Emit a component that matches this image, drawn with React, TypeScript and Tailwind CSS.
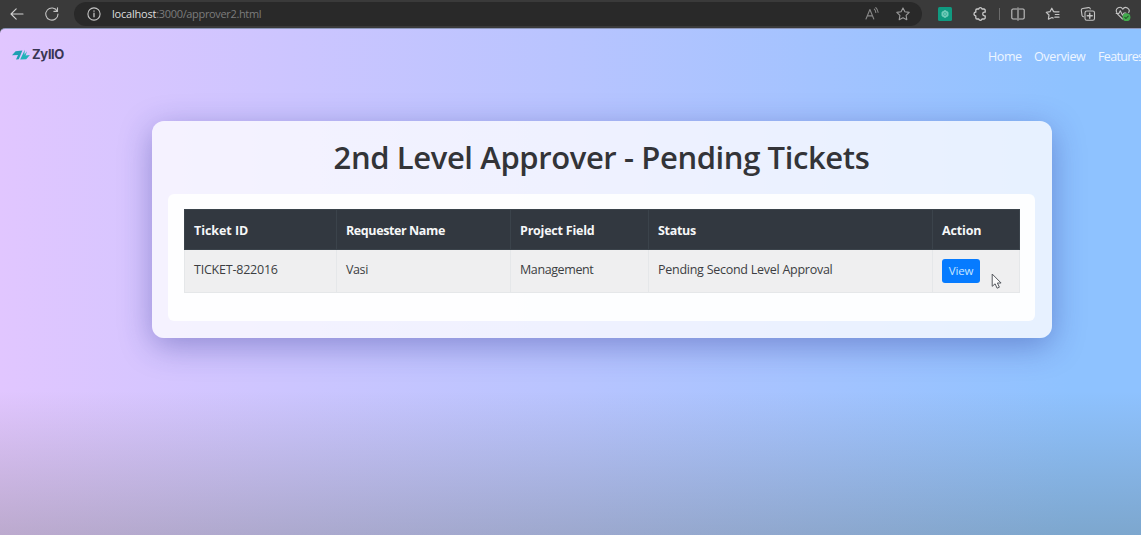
import type { ReactNode } from "react";

type Column = { label: string; value: string; width: string; head: string; cell: string };

const columns: Column[] = [
  { label: "Ticket ID", value: "TICKET-822016", width: "w-[152px]", head: "tracking-[-0.05px]", cell: "tracking-[-0.22px]" },
  { label: "Requester Name", value: "Vasi", width: "w-[174px]", head: "tracking-[-0.4px]", cell: "tracking-[-0.4px]" },
  { label: "Project Field", value: "Management", width: "w-[138px]", head: "tracking-[-0.22px]", cell: "tracking-[-0.4px]" },
  { label: "Status", value: "Pending Second Level Approval", width: "w-[284px]", head: "tracking-[-0.3px]", cell: "tracking-[-0.26px]" },
  { label: "Action", value: "", width: "w-[87px]", head: "tracking-[-0.15px]", cell: "" },
];

function Icon({ children, className = "text-[#c4c4c4]" }: { children: ReactNode; className?: string }) {
  return (
    <svg
      viewBox="0 0 16 16"
      className={`size-4 shrink-0 ${className}`}
      fill="none"
      stroke="currentColor"
      strokeWidth="1.1"
      strokeLinecap="round"
      strokeLinejoin="round"
    >
      {children}
    </svg>
  );
}

function BrowserBar() {
  return (
    <div className="flex h-7 items-center bg-[#3a3a3a] pl-[9px]">
      <Icon className="text-[#d2d2d2]">
        <path d="M14 8H2M7.200 2.800 2 8l5.200 5.200" />
      </Icon>
      <div className="w-[19px]" />
      <Icon className="text-[#c4c4c4]">
        <path d="M13.300 5.200A6.100 6.100 0 1 0 14 8M13.500 1.800v3.600H9.900" />
      </Icon>
      <div className="ml-[14px] flex h-6 w-[848px] shrink-0 items-center rounded-full bg-[#292929] pl-[12px] pr-[11px]">
        <Icon className="text-[#c4c4c4]">
          <circle cx="8" cy="8" r="6.100" />
          <path d="M8 7.200v3.600M8 5v.2" strokeWidth="1.300" />
        </Icon>
        <span className="ml-[10px] whitespace-nowrap text-[11px] leading-4 tracking-[-0.34px] text-[#7c7c7c]">
          <span className="tracking-[-0.2px] text-[#dedede]">localhost</span>:3000/approver2.html
        </span>
        <div className="flex-1" />
        <Icon className="text-[#888888]">
          <path d="M2 13 5.900 3.500 9.800 13M3.300 9.900h5.200M10.300 3.200a5 5 0 0 1 1.500 3.300M11.800 1.600a7 7 0 0 1 2.300 4.600" />
        </Icon>
        <div className="w-[15px]" />
        <Icon className="text-[#9a9a9a]">
          <path d="m8 1.900 1.900 3.900 4.300.6-3.100 3 .7 4.300L8 11.700l-3.800 2 .7-4.300-3.100-3 4.300-.6z" />
        </Icon>
      </div>
      <svg viewBox="0 0 14 14" className="ml-[16px] size-[14px] shrink-0">
        <rect width="14" height="14" rx="1.500" fill="#109a80" />
        <path d="m7 3.500 3 1.700v3.600l-3 1.700-3-1.700V5.200z" fill="#71cbb9" stroke="#71cbb9" strokeLinejoin="round" />
        <circle cx="7" cy="7" r="1.500" fill="none" stroke="#32ad95" strokeWidth=".8" />
      </svg>
      <div className="w-[20px]" />
      <Icon className="text-[#cacaca]">
        <path
          strokeWidth="1.300"
          d="M5 3h1.700a1.700 1.700 0 0 1 3.300 0h2a1.200 1.200 0 0 1 1.200 1.200v2h-.7a1.800 1.800 0 0 0 0 3.600h.7v2A1.200 1.200 0 0 1 12 13h-2a1.700 1.700 0 0 1-3.300 0H5a1.200 1.200 0 0 1-1.200-1.200v-2a1.800 1.800 0 0 1 0-3.600v-2A1.200 1.200 0 0 1 5 3Z"
        />
      </Icon>
      <div className="ml-[11px] h-3 w-px bg-[#6b6b6b]" />
      <div className="w-[10px]" />
      <Icon>
        <path d="M6.600 3H3a1.200 1.200 0 0 0-1.200 1.200v7.600A1.200 1.200 0 0 0 3 13h3.600M9.400 3H13a1.200 1.200 0 0 1 1.200 1.200v7.600A1.200 1.200 0 0 1 13 13H9.400M8 1.800v12.400" />
      </Icon>
      <div className="w-[19px]" />
      <Icon>
        <path strokeWidth="1.200" d="M9.800 5.800 8.600 5.600 6.800 2.200 5 5.700l-3.700.6L4 9l-.6 4.200L7 11.500l1.200.6M10 5.800h4M10.300 8.500h3.700M9.800 11.200H14" />
      </Icon>
      <div className="w-[19px]" />
      <Icon>
        <path d="M3.600 10.800A2 2 0 0 1 2 9.300L1.300 4.400a1.700 1.700 0 0 1 1.400-1.900l5.700-.9a1.700 1.700 0 0 1 1.900 1.300" />
        <rect x="5" y="5" width="9.500" height="9.300" rx="1.800" />
        <path d="M9.750 7.200v5M7.250 9.700h5" strokeWidth="1.400" />
      </Icon>
      <div className="w-[19px]" />
      <Icon>
        <path d="M7.500 13 2.600 8.200M1.800 6.500a3.300 3.300 0 0 1 6-3.300 3.300 3.300 0 0 1 5.900 3.300M1.200 7.500h2.600l1.500-2.700 2.200 4.400 1.500-2.200h2" />
        <circle cx="11.500" cy="11.200" r="3.900" fill="#43ac4e" stroke="none" />
        <path d="m9.800 11.300 1.200 1.200 2.200-2.400" stroke="#25572a" />
      </Icon>
    </div>
  );
}

function SiteHeader() {
  return (
    <header className="flex h-[52px] items-start justify-between">
      <div className="flex items-center pl-3 pt-[15px]">
        <svg viewBox="0 0 18 12" className="mt-px h-3 w-[18px]">
          <path d="M0 6.200 3.600 2.300l6.800-.8-3.600 8.700L4 10.600l2-4.600z" fill="#1e9fb2" />
          <path d="M12.800.8 8.200 10.500l6-.2L17.900 6l-4.300.5 1.400-4.200-2.600 3.500z" fill="#20b3b8" />
        </svg>
        <span className="ml-[2px] font-[Inter] text-[13px] font-bold leading-5 tracking-[-0.3px] text-[#393552]">ZyllO</span>
      </div>
      <nav className="flex w-[153px] gap-3 whitespace-nowrap pt-[18px] text-[12.500px] leading-5 text-[#eef6ff]">
        <a className="w-[34px] shrink-0 tracking-[-0.4px]">Home</a>
        <a className="w-[52px] shrink-0 tracking-[-0.35px]">Overview</a>
        <a className="shrink-0 tracking-[-0.65px]">Features</a>
      </nav>
    </header>
  );
}

function TicketTable() {
  return (
    <table className="w-[835px] table-fixed border-collapse text-left text-[12.500px] whitespace-nowrap">
      <thead>
        <tr className="h-10 bg-[#323840] text-[#f6f7f8]">
          {columns.map((c) => (
            <th key={c.label} className={`${c.width} ${c.head} border border-[#3b434b] px-[9px] pt-[4px] font-bold`}>
              {c.label}
            </th>
          ))}
        </tr>
      </thead>
      <tbody>
        <tr className="h-[43px] bg-[#efeff0] text-[#3c3e42]">
          {columns.map((c) => (
            <td key={c.label} className={`${c.cell} border border-[#e5e7e9] px-[9px] pb-[2px]`}>
              {c.value || (
                <button className="mt-[2px] block h-6 w-[38px] rounded-[3px] bg-[#067bff] text-[11.500px] leading-6 tracking-[-0.2px] text-[#c7e6ff]">
                  View
                </button>
              )}
            </td>
          ))}
        </tr>
      </tbody>
    </table>
  );
}

export default function App() {
  return (
    <div className="relative flex h-[535px] w-[1141px] flex-col overflow-hidden bg-[#3a3a3a] font-['Open_Sans','Noto_Sans',sans-serif]">
      <BrowserBar />
      <div className="flex-1 rounded-tl-[5px] border-t border-[#8b95b8] bg-[linear-gradient(180deg,transparent_362px,rgba(70,80,50,0.27)_525px),linear-gradient(90deg,#e1c6ff_0%,#b8c4ff_50%,#8ec2ff_94%,#8ec2ff_100%)]">
        <SiteHeader />
        <main className="ml-[151.500px] mt-[39.500px] h-[217px] w-[900px] rounded-[12px] bg-[#fdfdff]/80 px-4 pt-[17.500px] shadow-[0_8px_32px_rgba(31,38,135,0.37)]">
          <h1 className="h-[56px] whitespace-nowrap text-center text-[31px] font-semibold leading-[39px] tracking-[-0.39px] text-[#333438]">
            2nd Level Approver - Pending Tickets
          </h1>
          <section className="ml-[0.500px] h-[127px] w-[867px] rounded-[6px] bg-white/90 px-[16px] pt-[15px]">
            <TicketTable />
          </section>
        </main>
      </div>
      <svg viewBox="0 0 12 17" className="absolute left-[991px] top-[273px] h-[17px] w-3">
        <path d="M1.200 1v12.300l2.900-2.500 2 4.400 2.300-1-2-4.200h3.700z" fill="#fafafa" stroke="#55585e" strokeWidth="1" />
      </svg>
    </div>
  );
}
